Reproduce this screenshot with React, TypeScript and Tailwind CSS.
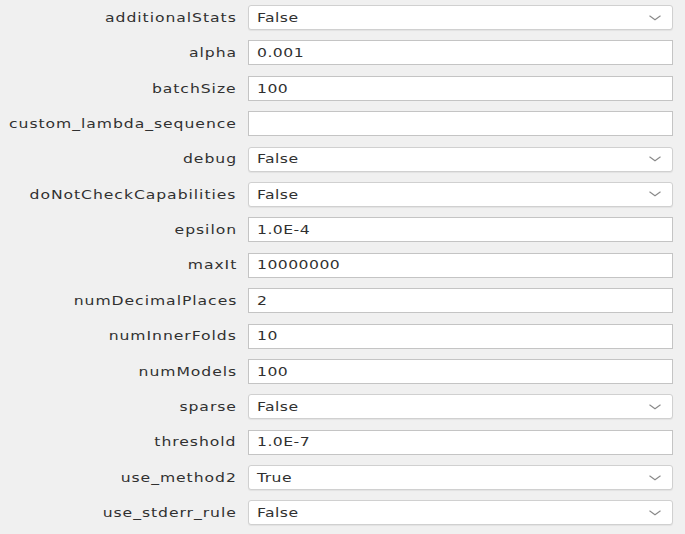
import React from "react";

type Row = { label: string; value: string; select?: boolean };

const rows: Row[] = [
  { label: "additionalStats", value: "False", select: true },
  { label: "alpha", value: "0.001" },
  { label: "batchSize", value: "100" },
  { label: "custom_lambda_sequence", value: "" },
  { label: "debug", value: "False", select: true },
  { label: "doNotCheckCapabilities", value: "False", select: true },
  { label: "epsilon", value: "1.0E-4" },
  { label: "maxIt", value: "10000000" },
  { label: "numDecimalPlaces", value: "2" },
  { label: "numInnerFolds", value: "10" },
  { label: "numModels", value: "100" },
  { label: "sparse", value: "False", select: true },
  { label: "threshold", value: "1.0E-7" },
  { label: "use_method2", value: "True", select: true },
  { label: "use_stderr_rule", value: "False", select: true },
];

function Chevron() {
  return (
    <svg width="12" height="6" viewBox="0 0 12 6" className="shrink-0">
      <polyline points="0.5,0.8 6,4.8 11.5,0.8" fill="none" stroke="#8a8a8a" strokeWidth="1.1" />
    </svg>
  );
}

export default function App() {
  return (
    <div
      className="w-[685px] h-[534px] bg-[#f0f0f0] overflow-hidden"
      style={{ fontFamily: '"DejaVu Sans", "Liberation Sans", sans-serif' }}
    >
      <div className="grid grid-cols-[236px_425px] gap-x-[12px] gap-y-[10.4px] pt-[5px] auto-rows-[25px]">
        {rows.map((r) => (
          <React.Fragment key={r.label}>
            <div className="flex items-center justify-end text-[13px] text-[#303030] whitespace-nowrap">
              <span className="inline-block origin-right scale-x-[1.2] tracking-[0.8px] -mr-[0.8px]">{r.label}</span>
            </div>
            {r.select ? (
              <div className="flex items-center justify-between bg-white border border-[#d0d0d0] rounded-[3px] shadow-[0_1px_1px_rgba(0,0,0,0.06)] pl-[8px] pr-[11px] text-[13px] text-[#303030]">
                <span className="inline-block origin-left scale-x-[1.2] tracking-[0.4px] whitespace-nowrap">{r.value}</span>
                <Chevron />
              </div>
            ) : (
              <div className="flex items-center bg-white border border-[#c4c4c4] pl-[8px] text-[13px] text-[#303030]">
                <span className="inline-block origin-left scale-x-[1.2] tracking-[0.4px] whitespace-nowrap">{r.value}</span>
              </div>
            )}
          </React.Fragment>
        ))}
      </div>
    </div>
  );
}
